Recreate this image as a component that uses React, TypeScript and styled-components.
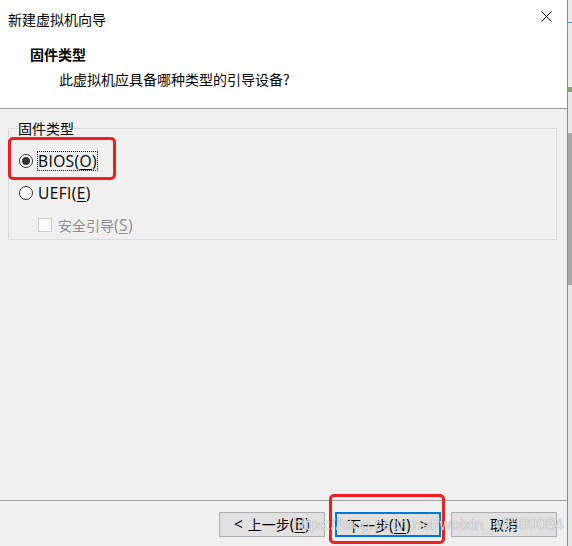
import React from "react";
import styled, { createGlobalStyle } from "styled-components";

const Global = createGlobalStyle`
  html, body { margin: 0; padding: 0; }
  body {
    width: 572px;
    height: 546px;
    overflow: hidden;
    font-family: "Noto Sans CJK SC", "Noto Sans", sans-serif;
    font-size: 14px;
    color: #000;
    background: #d9d9d9;
  }
`;

const Screen = styled.div`
  position: relative;
  display: flex;
  width: 572px;
  height: 546px;
`;

const Dialog = styled.div`
  display: flex;
  flex-direction: column;
  width: 567px;
  height: 546px;
  border-right: 1px solid #8c8c8c;
  background: #f0f0f0;
`;

const Strip = styled.div`
  display: flex;
  flex-direction: column;
  width: 4px;
  background: #e6e6e6;
`;

const StripPart = styled.div<{ $h: number; $c: string }>`
  height: ${(p) => p.$h}px;
  background: ${(p) => p.$c};
  flex-shrink: 0;
`;

const Header = styled.div`
  display: flex;
  flex-direction: column;
  height: 108px;
  background: #fff;
  border-bottom: 1px solid #a0a0a0;
  box-sizing: content-box;
`;

const TitleBar = styled.div`
  display: flex;
  align-items: center;
  justify-content: space-between;
  height: 20px;
  padding: 9px 15px 0 8px;
  line-height: 20px;
`;

const TitleText = styled.span`
  font-size: 14px;
  color: #000;
`;

const Close = styled.svg`
  width: 11px;
  height: 11px;
  margin-top: -5px;
`;

const Heading = styled.div`
  margin: 15px 0 0 30px;
  font-size: 14px;
  font-weight: 700;
  line-height: 20px;
`;

const SubHeading = styled.div`
  margin: 5px 0 0 59px;
  font-size: 14px;
  line-height: 20px;
`;

const Latin = styled.span`
  font-family: "Open Sans", "Noto Sans", sans-serif;
  font-size: 15.5px;
  letter-spacing: 0.4px;
  u { text-decoration: underline; text-decoration-thickness: 1px; text-underline-offset: 2px; }
`;

const Body = styled.div`
  flex: 1;
  padding: 11px 10px 0 8px;
`;

const Group = styled.fieldset`
  margin: 0;
  padding: 13px 0 2px 10px;
  border: 1px solid #dcdcdc;
  display: flex;
  flex-direction: column;
  gap: 8px;
  min-width: 0;
`;

const Legend = styled.legend`
  margin-left: -1px;
  padding: 0;
  font-size: 14px;
  line-height: 16px;
`;

const Row = styled.label<{ $indent?: number }>`
  display: flex;
  align-items: center;
  height: 24px;
  padding-left: ${(p) => p.$indent ?? 0}px;
  gap: 5px;
`;

const Radio = styled.span<{ $checked?: boolean }>`
  width: 14px;
  height: 14px;
  box-sizing: border-box;
  border: 1px solid #333;
  border-radius: 50%;
  background: #fff;
  display: flex;
  align-items: center;
  justify-content: center;
  &::after {
    content: "";
    width: 8px;
    height: 8px;
    border-radius: 50%;
    background: ${(p) => (p.$checked ? "#333" : "transparent")};
  }
`;

const Check = styled.span`
  width: 14px;
  height: 14px;
  box-sizing: border-box;
  border: 1px solid #cccccc;
  background: #fafafa;
  margin-right: 1px;
`;

const Label = styled.span<{ $focus?: boolean; $disabled?: boolean }>`
  display: flex;
  align-items: baseline;
  padding: 0 1px;
  height: 20px;
  line-height: 20px;
  color: ${(p) => (p.$disabled ? "#8d8d8d" : "#000")};
  outline: ${(p) => (p.$focus ? "1px dotted #000" : "none")};
  outline-offset: -1px;
  margin-left: -1px;
  white-space: pre;
`;

const Footer = styled.div`
  display: flex;
  justify-content: flex-end;
  gap: 10px;
  padding: 11px 10px 9px 0;
  border-top: 1px solid #a0a0a0;
`;

const Button = styled.button<{ $primary?: boolean }>`
  display: flex;
  align-items: baseline;
  justify-content: center;
  width: 106px;
  height: 25px;
  box-sizing: border-box;
  padding: 1px 0 0;
  font-family: "Noto Sans CJK SC", "Noto Sans", sans-serif;
  font-size: 14px;
  line-height: 20px;
  color: #000;
  background: #e1e1e1;
  border: ${(p) => (p.$primary ? "2px solid #0078d7" : "1px solid #adadad")};
  white-space: pre;
`;

const Mark = styled.div<{ $l: number; $t: number; $w: number; $h: number }>`
  position: absolute;
  left: ${(p) => p.$l}px;
  top: ${(p) => p.$t}px;
  width: ${(p) => p.$w}px;
  height: ${(p) => p.$h}px;
  box-sizing: border-box;
  border: 3px solid #f21d1d;
  border-radius: 5px;
  pointer-events: none;
`;

const Watermark = styled.div`
  position: absolute;
  right: 8px;
  top: 515px;
  font-family: "Liberation Sans", Arial, sans-serif;
  font-size: 16px;
  line-height: 20px;
  color: rgba(255, 255, 255, 0.78);
  text-shadow: 0 0 1px rgba(0, 0, 0, 0.45);
  pointer-events: none;
  white-space: nowrap;
`;

export default function App() {
  return (
    <>
      <Global />
      <Screen>
        <Dialog>
          <Header>
            <TitleBar>
              <TitleText>新建虚拟机向导</TitleText>
              <Close viewBox="0 0 11 11">
                <path d="M0.5 0.5 L10.5 10.5 M10.5 0.5 L0.5 10.5" stroke="#000" strokeWidth="1" fill="none" />
              </Close>
            </TitleBar>
            <Heading>固件类型</Heading>
            <SubHeading>此虚拟机应具备哪种类型的引导设备?</SubHeading>
          </Header>
          <Body>
            <Group>
              <Legend>固件类型</Legend>
              <Row>
                <Radio $checked />
                <Label $focus>
                  <Latin>
                    BIOS(<u>O</u>)
                  </Latin>
                </Label>
              </Row>
              <Row>
                <Radio />
                <Label>
                  <Latin>
                    UEFI(<u>E</u>)
                  </Latin>
                </Label>
              </Row>
              <Row $indent={19}>
                <Check />
                <Label $disabled>
                  安全引导
                  <Latin>
                    (<u>S</u>)
                  </Latin>
                </Label>
              </Row>
            </Group>
          </Body>
          <Footer>
            <Button>
              <Latin>{"< "}</Latin>上一步
              <Latin>
                (<u>B</u>)
              </Latin>
            </Button>
            <Button $primary>
              下一步
              <Latin>
                (<u>N</u>)
              </Latin>
              <Latin>{"  >"}</Latin>
            </Button>
            <Button>取消</Button>
          </Footer>
        </Dialog>
        <Strip>
          <StripPart $h={22} $c="#e9e9e9" />
          <StripPart $h={1} $c="#4a90c8" />
          <StripPart $h={64} $c="#ececec" />
          <StripPart $h={5} $c="#7fa86a" />
          <StripPart $h={41} $c="#e8e8e8" />
          <StripPart $h={152} $c="#a9a9a9" />
          <StripPart $h={261} $c="#e6e6e6" />
        </Strip>
        <Mark $l={8} $t={137} $w={108} $h={43} />
        <Mark $l={329} $t={494} $w={116} $h={50} />
        <Watermark>https://blog.csdn.net/weixin_43589084</Watermark>
      </Screen>
    </>
  );
}
